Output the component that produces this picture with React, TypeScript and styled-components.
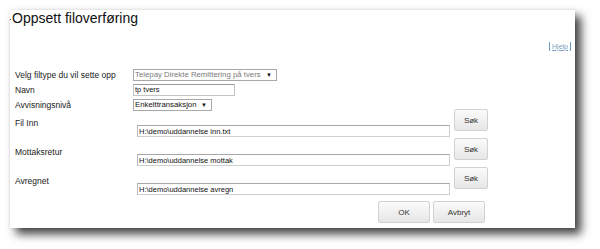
import React from "react";
import styled, { createGlobalStyle } from "styled-components";

const GlobalStyle = createGlobalStyle`
  html, body {
    margin: 0;
    padding: 0;
    background: #ffffff;
  }
  body {
    font-family: "Liberation Sans", Arial, sans-serif;
    color: #222;
  }
`;

interface IFileRow {
  label: string;
  value: string;
}

const fileRows: IFileRow[] = [
  { label: "Fil Inn", value: "H:\\demo\\uddannelse inn.txt" },
  { label: "Mottaksretur", value: "H:\\demo\\uddannelse mottak" },
  { label: "Avregnet", value: "H:\\demo\\uddannelse avregn" },
];

export default () => {
  return (
    <Page>
      <GlobalStyle />
      <Panel>
        <Title>Oppsett filoverføring</Title>
        <HelpBar>
          <Pipe />
          <HelpLink href="#">Hjelp</HelpLink>
          <Pipe />
        </HelpBar>
        <Form>
          <SimpleRow>
            <Label>Velg filtype du vil sette opp</Label>
            <SelectBox width={144} muted>
              <SelectText>Telepay Direkte Remittering på tvers</SelectText>
              <Arrow>▼</Arrow>
            </SelectBox>
          </SimpleRow>
          <SimpleRow>
            <Label>Navn</Label>
            <TextInput width={102} defaultValue="tp tvers" />
          </SimpleRow>
          <SimpleRow>
            <Label>Avvisningsnivå</Label>
            <SelectBox width={79}>
              <SelectText>Enkelttransaksjon</SelectText>
              <Arrow>▼</Arrow>
            </SelectBox>
          </SimpleRow>
          <FileList>
            {fileRows.map((row) => (
              <FileRow key={row.label}>
                <FileLabel>{row.label}</FileLabel>
                <FileInput width={313} defaultValue={row.value} />
                <Button width={34} height={22}>
                  Søk
                </Button>
              </FileRow>
            ))}
          </FileList>
          <Actions>
            <Button width={52} height={22}>
              OK
            </Button>
            <Button width={52} height={22}>
              Avbryt
            </Button>
          </Actions>
        </Form>
      </Panel>
    </Page>
  );
};

const Page = styled.div`
  padding: 10px 0 0 10px;
  width: 600px;
  height: 249px;
  box-sizing: border-box;
  overflow: hidden;
`;

const Panel = styled.div`
  width: 565px;
  height: 218px;
  background: #ffffff;
  box-shadow: 6px 6px 9px rgba(0, 0, 0, 0.75), 0 0 3px rgba(0, 0, 0, 0.1);
  display: flex;
  flex-direction: column;
`;

const Title = styled.h1`
  margin: 0;
  padding-left: 2px;
  font-size: 14px;
  line-height: 16px;
  font-weight: normal;
  color: #111;
  position: relative;

  &::before {
    content: "";
    position: absolute;
    left: 0;
    top: 9px;
    width: 1px;
    height: 1px;
    background: #555;
  }
`;

const HelpBar = styled.div`
  margin-top: 15px;
  padding-right: 4px;
  display: flex;
  justify-content: flex-end;
  align-items: center;
  gap: 2px;
  height: 10px;
`;

const Pipe = styled.span`
  width: 1px;
  height: 9px;
  background: #6f9ac0;
`;

const HelpLink = styled.a`
  font-size: 7px;
  color: #7f9fbf;
  text-decoration: underline;
`;

const Form = styled.div`
  margin-top: 16px;
  padding-left: 5px;
  display: flex;
  flex-direction: column;
`;

const SimpleRow = styled.div`
  display: grid;
  grid-template-columns: 118px auto;
  justify-content: start;
  align-items: center;
  height: 15px;
`;

const Label = styled.label`
  font-size: 8.5px;
  color: #1a1a1a;
  white-space: nowrap;
`;

const SelectBox = styled.div<{ width: number; muted?: boolean }>`
  width: ${(p) => p.width}px;
  height: 12px;
  box-sizing: border-box;
  border: 1px solid #a8a8a8;
  background: #fff;
  display: flex;
  align-items: center;
  gap: 4px;
  padding: 0 4px 0 1px;
  font-size: 7.8px;
  color: ${(p) => (p.muted ? "#7a7a7a" : "#111")};
  white-space: nowrap;
`;

const SelectText = styled.span`
  flex: 1;
  min-width: 0;
  overflow: hidden;
`;

const Arrow = styled.span`
  flex: none;
  font-size: 6px;
  color: #111;
`;

const TextInput = styled.input<{ width: number }>`
  width: ${(p) => p.width}px;
  height: 12px;
  box-sizing: border-box;
  border: 1px solid #c4c4c4;
  border-top-color: #9a9a9a;
  padding: 0 1px;
  margin: 0;
  font-family: "Liberation Sans", Arial, sans-serif;
  font-size: 7.5px;
  color: #111;
  outline: none;
`;

const FileList = styled.div`
  margin-top: -3px;
  display: flex;
  flex-direction: column;
`;

const FileRow = styled.div`
  display: grid;
  grid-template-columns: 118px 313px 34px;
  column-gap: 4px;
  height: 29px;
`;

const FileLabel = styled(Label)`
  align-self: start;
  padding-top: 9px;
  line-height: 10px;
`;

const FileInput = styled(TextInput)`
  align-self: start;
  margin-top: 16px;
  border-color: #cfcfcf;
  border-top-color: #a8a8a8;
  border-left-color: #b8b8b8;
`;

const Button = styled.button<{ width: number; height: number }>`
  width: ${(p) => p.width}px;
  height: ${(p) => p.height}px;
  box-sizing: border-box;
  margin: 0;
  padding: 0;
  border: 1px solid #d2d2d2;
  border-radius: 2px;
  background: linear-gradient(#fbfbfb, #e6e6e6);
  font-family: "Liberation Sans", Arial, sans-serif;
  font-size: 8px;
  color: #333;
  align-self: start;
`;

const Actions = styled.div`
  margin-top: 5px;
  width: 470px;
  display: flex;
  justify-content: flex-end;
  gap: 3px;
`;
